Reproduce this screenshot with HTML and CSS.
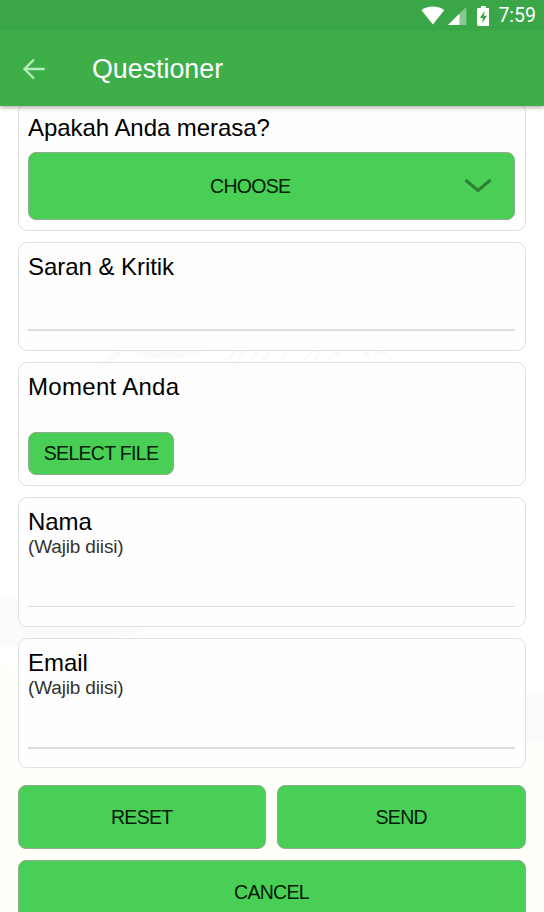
FILE: index.html
```html
<!DOCTYPE html>
<html lang="id">
<head>
    <meta charset="UTF-8">
    <meta name="viewport" content="width=device-width, initial-scale=1.0">
    <title>Questioner</title>
    <link rel="stylesheet" href="styles.css">
</head>
<body>
    <header>
        <div class="status-bar">
            <svg class="wifi" width="24" height="19" viewBox="0 0 24 19">
                <path d="M12 18.5L0.5 4.2C3.5 1.8 7.5 0.5 12 0.5s8.500 1.300 11.500 3.700z" fill="#fff"/>
            </svg>
            <svg class="signal" width="19" height="18" viewBox="0 0 19 18">
                <path d="M0 18L18.500 0v18z" fill="#fff" opacity="0.4"/>
                <path d="M0 18L11.500 6.800V18z" fill="#fff"/>
            </svg>
            <svg class="battery" width="13" height="20" viewBox="0 0 13 20">
                <path d="M4 0h5v2h2.500q1.500 0 1.500 1.500v15q0 1.500-1.500 1.500h-10Q0 20 0 18.500v-15Q0 2 1.500 2H4z" fill="#fff"/>
                <path d="M7.800 5L2.800 12h3.200l-.8 5 5-7.200H7z" fill="#3ba647"/>
            </svg>
            <span class="clock">7:59</span>
        </div>
        <div class="toolbar">
            <svg class="back" width="24" height="24" viewBox="0 0 24 24" fill="none" stroke="#b5edbb" stroke-width="2.300">
                <path d="M22.500 12H3M12 2.500L2.500 12l9.500 9.500"/>
            </svg>
            <h1>Questioner</h1>
        </div>
    </header>

    <main>
        <!-- Decorative background -->
        <svg class="backdrop" width="544" height="806" viewBox="0 106 544 806">
            <path d="M0 596Q14 597 28 606L150 630Q100 646 0 646z" fill="#fbfbfb"/>
            <path d="M544 693L515 697V742H544z" fill="#f9fcfb"/>
            <path d="M0 660Q120 740 300 744T544 741V912H0z" fill="#fffffa"/>
            <path d="M98 362L117 351H126L109 362zM130 351H204Q166 367 130 351z" fill="#fafafa"/>
            <path d="M226 361l9-9h9l-7 10M250 361l7-9M263 361l7-9M280 361l6-8M304 360l8-8h8l-5 9M327 360l12-8M364 353l6 0M375 353l12 0" fill="none" stroke="#fafafa" stroke-width="3"/>
        </svg>

        <div class="card card-choose">
            <h2>Apakah Anda merasa?</h2>
            <button class="btn choose">
                <span>CHOOSE</span>
                <svg class="chevron" width="28" height="16" viewBox="0 0 28 16" fill="none" stroke="#2f7e37" stroke-width="3">
                    <path d="M1.500 2L14 12.500 26.500 2"/>
                </svg>
            </button>
        </div>

        <div class="card card-saran">
            <h2>Saran &amp; Kritik</h2>
            <input class="thick" type="text" aria-label="Saran &amp; Kritik">
        </div>

        <div class="card card-file">
            <h2>Moment Anda</h2>
            <button class="btn select">SELECT FILE</button>
        </div>

        <div class="card card-field">
            <h2>Nama</h2>
            <p>(Wajib diisi)</p>
            <input type="text" aria-label="Nama">
        </div>

        <div class="card card-field">
            <h2>Email</h2>
            <p>(Wajib diisi)</p>
            <input class="thick" type="text" aria-label="Email">
        </div>

        <div class="actions">
            <button class="btn">RESET</button>
            <button class="btn">SEND</button>
            <button class="btn cancel">CANCEL</button>
        </div>
    </main>
</body>
</html>
```
FILE: styles.css
```css
* {
    box-sizing: border-box;
}

body {
    font-family: "Liberation Sans", Arial, sans-serif;
    background-color: #fff;
    color: #000;
    margin: 0;
    height: 912px;
    display: flex;
    flex-direction: column;
    overflow: hidden;
}

header {
    background-color: #3eae49;
    color: white;
    height: 106px;
    flex-shrink: 0;
    z-index: 10;
    box-shadow: 0 1px 5px rgba(0, 0, 0, 0.4);
}

.status-bar {
    height: 31px;
    background-color: #3ba647;
    display: flex;
    align-items: center;
    padding: 0 8px 0 421px;
}

.signal {
    margin-left: 3px;
}

.battery {
    margin-left: 10px;
}

.clock {
    font-family: Roboto, sans-serif;
    font-size: 19.500px;
    font-weight: 400;
    margin-left: 9px;
}

.toolbar {
    height: 75px;
    display: flex;
    align-items: center;
    padding-left: 22px;
}

h1 {
    font-size: 26.800px;
    font-weight: normal;
    margin: 2px 0 0 46px;
}

main {
    position: relative;
    flex: 1;
    min-height: 0;
    padding: 0 18.500px 0 17.500px;
    display: flex;
    flex-direction: column;
    gap: 11px;
    overflow: hidden;
}

.backdrop {
    position: absolute;
    top: 0;
    left: 0;
}

.card {
    position: relative;
    flex-shrink: 0;
    padding: 10px 9.500px 9px;
    border: 1.500px solid #e0e0e0;
    border-radius: 9px;
    background-color: #fefefe;
    display: flex;
    flex-direction: column;
    align-items: flex-start;
}

.card-choose {
    height: 128px;
    margin-top: -3px;
}

.card-saran {
    height: 109px;
}

.card-file {
    height: 124px;
}

.card-field {
    height: 130px;
}

h2 {
    font-size: 24px;
    font-weight: normal;
    line-height: 28px;
    letter-spacing: -0.05px;
    margin: 0;
}

.card-file h2 {
    letter-spacing: 0.3px;
}

p {
    color: #333;
    font-size: 19px;
    line-height: 22px;
    letter-spacing: -0.15px;
    margin: 0;
}

input {
    width: 100%;
    height: 26px;
    margin-top: auto;
    margin-bottom: 10px;
    padding: 0;
    border: none;
    border-bottom: 1px solid #ddd;
    background: transparent;
    outline: none;
}

input.thick {
    border-bottom-width: 2px;
}

.card-field .thick {
    margin-bottom: 9px;
}

.btn {
    font-family: inherit;
    font-size: 19.500px;
    letter-spacing: -0.7px;
    color: #001a04;
    background-color: #49cf56;
    border: 1px solid #8fae90;
    border-radius: 8px;
    padding: 0;
    height: 64px;
}

.choose {
    width: 100%;
    height: 68px;
    margin-top: auto;
    margin-bottom: 1px;
    display: flex;
    align-items: center;
    justify-content: space-between;
    padding: 0 22px 0 181px;
}

.select {
    width: 146px;
    height: 43px;
    margin-top: auto;
    margin-bottom: 1px;
}

.actions {
    position: relative;
    display: grid;
    grid-template-columns: 1fr 1fr;
    gap: 11px;
    margin-top: 6px;
    flex-shrink: 0;
}

.cancel {
    grid-column: 1 / 3;
}
```
